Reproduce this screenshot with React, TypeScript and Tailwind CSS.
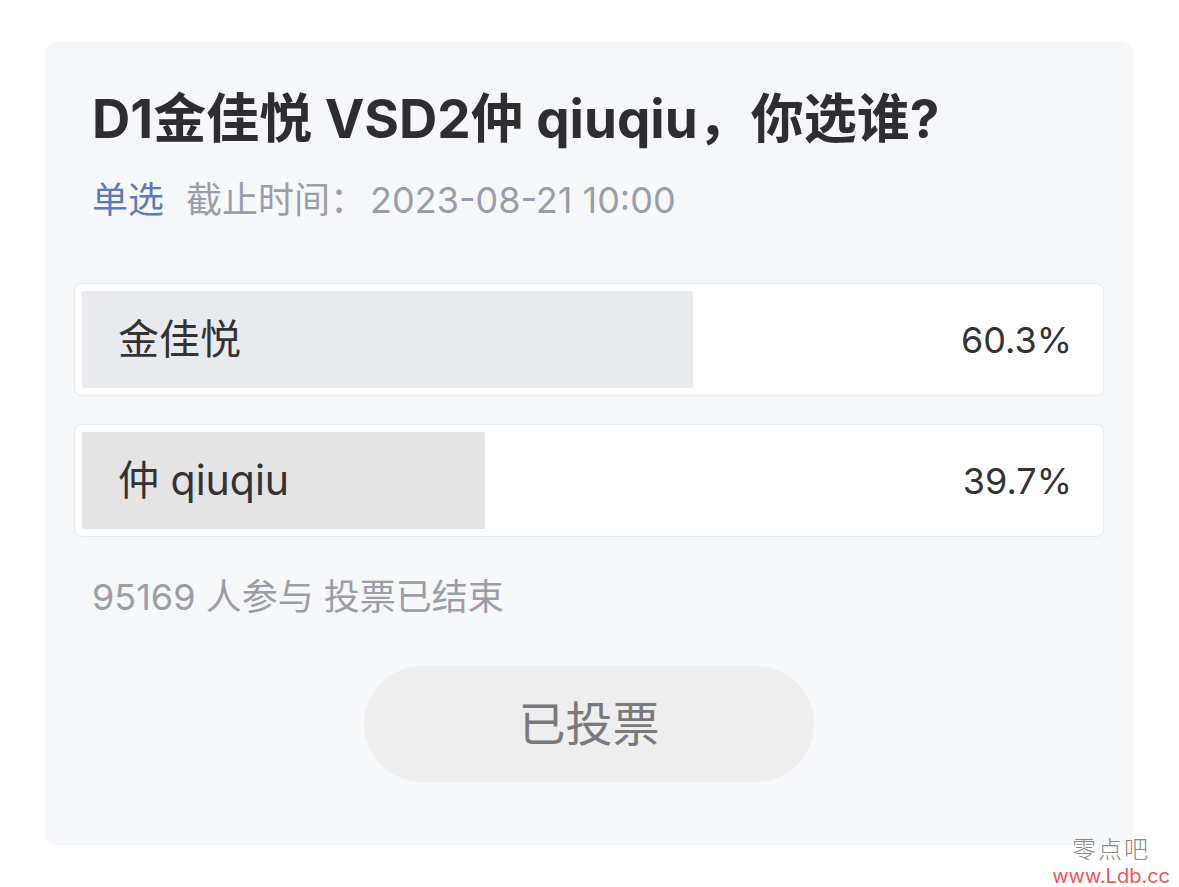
const FONT = 'font-["Inter","Noto_Sans_CJK_SC",sans-serif]';

const options = [
  { label: '金佳悦', percent: 60.3, fill: 'bg-[#e9eaed]' },
  { label: '仲 qiuqiu', percent: 39.7, fill: 'bg-[#e4e4e5]' },
];

function OptionRow({ label, percent, fill }: { label: string; percent: number; fill: string }) {
  return (
    <div className="rounded-[8px] border border-[#e8e9ec] bg-white p-[7px]">
      <div className="relative h-[97px] rounded-[2px]">
        <div className={`absolute inset-y-0 left-0 rounded-[2px] ${fill}`} style={{ width: `${percent}%` }} />
        <div className="relative flex h-full items-center justify-between pl-[36px] pr-[24px]">
          <span className="text-[41px] leading-none text-[#333335]">{label}</span>
          <span className="text-[36px] leading-none text-[#333335]">{percent.toFixed(1)}%</span>
        </div>
      </div>
    </div>
  );
}

export default function App() {
  return (
    <div className={`relative min-h-[887px] w-[1179px] bg-white ${FONT}`}>
      <div className="pl-[45px] pt-[42px]">
        <div className="flex h-[803px] w-[1088px] flex-col rounded-[12px] bg-[#f6f7f9] px-[29px] pt-[51px]">
          {/* Header */}
          <div className="pl-[18px]">
            <h1 className="text-[53px] font-bold leading-[52px] text-[#2e2e30]">D1金佳悦 VSD2仲 qiuqiu，你选谁?</h1>
            <p className="mt-[37px] text-[36px] leading-[36px] text-[#9b9ea8]">
              <span className="text-[#5b7bb6]">单选</span>
              <span className="ml-[22px]">截止时间：</span>
              <span className="ml-[4px]">2023-08-21 10:00</span>
            </p>
          </div>

          {/* Options */}
          <div className="mt-[65px] flex flex-col gap-[28px]">
            {options.map((o) => (
              <OptionRow key={o.label} {...o} />
            ))}
          </div>

          <p className="mt-[42px] pl-[18px] text-[36px] leading-[36px] text-[#9b9da7]">95169 人参与 投票已结束</p>

          <div className="mt-[51px] flex justify-center">
            <button className="h-[116px] w-[450px] rounded-full bg-[#eeeeef] text-[47px] text-[#7a7a7c]">已投票</button>
          </div>
        </div>
      </div>

      {/* watermark */}
      <div className="absolute right-[9px] top-[838px] flex flex-col items-center leading-none">
        <span className="text-[24px] font-light tracking-[2px] text-[#888]">零点吧</span>
        <span className="mt-[4px] text-[20px] text-[#e5585e]">www.Ldb.cc</span>
      </div>
    </div>
  );
}
